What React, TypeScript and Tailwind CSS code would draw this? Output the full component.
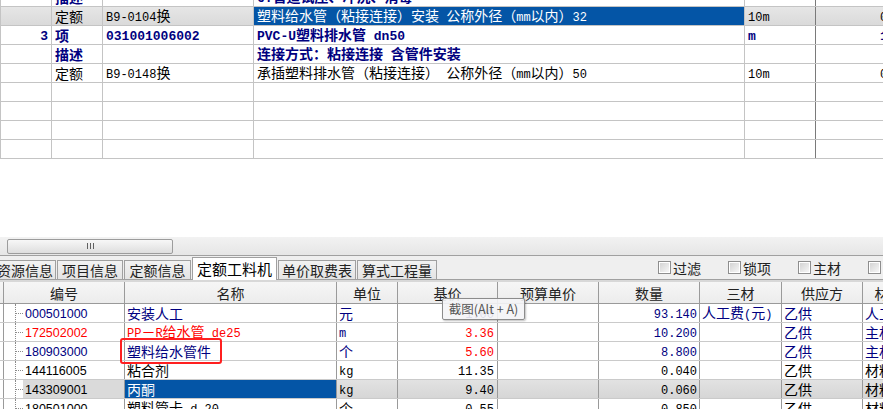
import React from 'react';

type Variant = 'mono' | 'monoBold' | 'sans';

// ASCII runs get a narrower latin face, CJK stays in Noto
const Txt = ({ s, v = 'mono' }: { s: string; v?: Variant }) => {
  const parts = s.match(/[\x20-\x7e]+|[^\x20-\x7e]+/g) ?? [];
  const latin = {
    mono: "font-['Liberation_Mono',monospace] text-[12px]",
    monoBold: "font-['Liberation_Mono',monospace] text-[13px] font-bold",
    sans: "font-['Liberation_Sans',sans-serif] text-[12.5px]",
  }[v];
  return (
    <span className="whitespace-pre">
      {parts.map((p, i) =>
        /[\x20-\x7e]/.test(p[0]) ? (
          <span key={i} className={latin}>
            {p}
          </span>
        ) : (
          <span key={i}>{p}</span>
        )
      )}
    </span>
  );
};

const topCols = [
  'w-[51px] shrink-0 border-r border-[#c4c4c4] justify-end pr-[3px]',
  'w-[51px] shrink-0 border-r border-[#c4c4c4] pl-[3px]',
  'w-[151px] shrink-0 border-r border-[#c4c4c4] pl-[3px]',
  'w-[491px] shrink-0 border-r border-[#c4c4c4] pl-[3px]',
  'w-[71px] shrink-0 border-r border-[#7a7a7a] pl-[3px]',
  'flex-1 pl-[64px]',
];

const topRows: { cells: string[]; bold?: boolean; gray?: boolean; sel?: number }[] = [
  { cells: ['', '描述', '', '6.管道试压、冲洗、消毒', '', ''], bold: true },
  { cells: ['', '定额', 'B9-0104换', '塑料给水管（粘接连接）安装 公称外径（mm以内）32', '10m', '0.1'], gray: true, sel: 3 },
  { cells: ['3', '项', '031001006002', 'PVC-U塑料排水管 dn50', 'm', '1'], bold: true },
  { cells: ['', '描述', '', '连接方式：粘接连接 含管件安装', '', ''], bold: true },
  { cells: ['', '定额', 'B9-0148换', '承插塑料排水管（粘接连接） 公称外径（mm以内）50', '10m', '0.1'] },
  { cells: ['', '', '', '', '', ''] },
  { cells: ['', '', '', '', '', ''] },
  { cells: ['', '', '', '', '', ''] },
  { cells: ['', '', '', '', '', ''] },
];

const TopGrid = () => (
  <div className="mt-[-12px] border-l border-[#c4c4c4]">
    {topRows.map((r, ri) => (
      <div
        key={ri}
        className={`flex h-[19px] border-b border-[#c4c4c4] ${r.gray ? 'bg-linear-to-b from-[#e6e6e6] to-[#dadada]' : ''}`}
      >
        {r.cells.map((c, ci) => (
          <div
            key={ci}
            className={`${topCols[ci]} flex items-center overflow-hidden whitespace-nowrap leading-[18px] ${
              r.sel === ci ? 'bg-[#0455a6] text-white' : r.bold ? 'text-[#000080] font-bold' : 'text-black'
            }`}
          >
            <Txt s={c} v={r.bold ? 'monoBold' : 'mono'} />
          </div>
        ))}
      </div>
    ))}
  </div>
);

const ScrollBar = () => (
  <div className="h-[18px] bg-linear-to-b from-[#f2f2f2] to-[#e6e6e6] flex items-center">
    <div className="ml-[7px] w-[166px] h-[15px] rounded-[2px] border border-[#9c9c9c] bg-linear-to-b from-[#f7f7f7] to-[#dedede] flex items-center justify-center gap-[2px]">
      <div className="w-px h-[6px] bg-[#606060]" />
      <div className="w-px h-[6px] bg-[#606060]" />
      <div className="w-px h-[6px] bg-[#606060]" />
    </div>
  </div>
);

const tabs: [string, string][] = [
  ['资源信息', 'w-[63px]'],
  ['项目信息', 'w-[66px]'],
  ['定额信息', 'w-[67px]'],
  ['定额工料机', 'w-[85px]'],
  ['单价取费表', 'w-[78px]'],
  ['算式工程量', 'w-[80px]'],
];
const checks = ['过滤', '锁项', '主材', '暂估'];

const TabStrip = () => (
  <div className="h-[25px] border-t border-b border-[#a0a0a0] bg-[#efefef] flex items-end whitespace-nowrap">
    <div className="flex items-end ml-[-7px] gap-px shrink-0">
      {tabs.map(([t, w], i) =>
        i === 3 ? (
          <div
            key={t}
            className={`${w} shrink-0 h-[23px] mb-[-1px] bg-white border border-b-0 border-[#a0a0a0] text-[15px] leading-[21px] text-black text-center`}
          >
            {t}
          </div>
        ) : (
          <div
            key={t}
            className={`${w} shrink-0 h-[19px] bg-linear-to-b from-[#f2f2f2] to-[#e4e4e4] border border-b-0 border-[#a0a0a0] text-[14px] leading-[18px] text-[#222] ${i === 0 ? 'text-right pr-[2px]' : 'text-center'}`}
          >
            {t}
          </div>
        )
      )}
    </div>
    <div className="ml-[221px] self-center flex gap-[27px] shrink-0">
      {checks.map((c) => (
        <div key={c} className="flex items-center gap-[2px] shrink-0">
          <div className="w-[13px] h-[13px] border border-[#8e8e8e] p-px bg-white">
            <div className="w-full h-full bg-linear-to-br from-[#d4d4d4] to-[#f6f6f6]" />
          </div>
          <span className="text-[14px] leading-[18px] text-[#222]">{c}</span>
        </div>
      ))}
    </div>
  </div>
);

const NAVY = 'text-[#000080]';
const RED = 'text-[#ff0000]';
const BLK = 'text-black';

type BRow = {
  code: [string, string];
  name: [string, string];
  unit: [string, string];
  base: [string, string];
  qty: [string, string];
  sancai: string;
  sup: [string, string];
  cat: [string, string];
  gray?: boolean;
};

const bRows: BRow[] = [
  { code: ['000501000', NAVY], name: ['安装人工', NAVY], unit: ['元', NAVY], base: ['1.00', NAVY], qty: ['93.140', NAVY], sancai: '人工费(元)', sup: ['乙供', NAVY], cat: ['人工', NAVY] },
  { code: ['172502002', RED], name: ['PP－R给水管 de25', RED], unit: ['m', NAVY], base: ['3.36', RED], qty: ['10.200', NAVY], sancai: '', sup: ['乙供', NAVY], cat: ['主材', NAVY] },
  { code: ['180903000', NAVY], name: ['塑料给水管件', NAVY], unit: ['个', NAVY], base: ['5.60', RED], qty: ['8.800', NAVY], sancai: '', sup: ['乙供', NAVY], cat: ['主材', NAVY] },
  { code: ['144116005', BLK], name: ['粘合剂', BLK], unit: ['kg', BLK], base: ['11.35', BLK], qty: ['0.040', BLK], sancai: '', sup: ['乙供', BLK], cat: ['材料', BLK] },
  { code: ['143309001', BLK], name: ['丙酮', BLK], unit: ['kg', BLK], base: ['9.40', BLK], qty: ['0.060', BLK], sancai: '', sup: ['乙供', BLK], cat: ['材料', BLK], gray: true },
  { code: ['180501000', BLK], name: ['塑料管卡 d.20', BLK], unit: ['个', BLK], base: ['0.55', BLK], qty: ['0.850', BLK], sancai: '', sup: ['乙供', BLK], cat: ['材料', BLK] },
];

const colLine = 'border-r border-[#9a9a9a]';
const cell = 'h-full flex items-center overflow-hidden whitespace-nowrap leading-[18px]';

const BottomGrid = () => (
  <div>
    <div className="flex h-[24px] border-t-2 border-b border-t-[#d8d8d8] border-b-[#9a9a9a] bg-linear-to-b from-[#f6f6f6] to-[#ececec] text-[14px] text-[#222]">
      <div className={`w-[4px] shrink-0 ${colLine}`} />
      {[
        ['编号', 'w-[121px]'],
        ['名称', 'w-[212px]'],
        ['单位', 'w-[61px]'],
        ['基价', 'w-[100px]'],
        ['预算单价', 'w-[101px]'],
        ['数量', 'w-[101px]'],
        ['三材', 'w-[82px]'],
        ['供应方', 'w-[81px]'],
        ['材料类别', 'w-[80px]'],
      ].map(([t, w]) => (
        <div key={t} className={`${w} shrink-0 ${colLine} ${cell} justify-center`}>
          {t}
        </div>
      ))}
    </div>
    {bRows.map((r, i) => (
      <div key={i} className="flex h-[19px] border-b border-[#cacaca] text-[14px]">
        <div className={`w-[4px] shrink-0 ${colLine}`} />
        <div className="w-[19px] shrink-0 h-full flex">
          <div className="ml-[11px] h-full border-l border-dotted border-[#8a8a8a] flex items-center">
            <div className="w-[7px] border-t border-dotted border-[#8a8a8a]" />
          </div>
        </div>
        <div className={`w-[102px] shrink-0 ${colLine} ${cell} pl-[2px] ${r.code[1]} ${r.gray ? 'bg-[#dadada]' : ''}`}>
          <Txt s={r.code[0]} v="sans" />
        </div>
        <div className={`w-[212px] shrink-0 ${colLine} ${cell} pl-[2px] ${r.gray ? 'bg-[#0455a6] text-white' : r.name[1]}`}>
          <Txt s={r.name[0]} />
        </div>
        <div className={`flex-1 flex h-full ${r.gray ? 'bg-linear-to-b from-[#e2e2e2] to-[#d6d6d6]' : ''}`}>
          <div className={`w-[61px] shrink-0 ${colLine} ${cell} pl-[2px] ${r.unit[1]}`}>
            <Txt s={r.unit[0]} />
          </div>
          <div className={`w-[100px] shrink-0 ${colLine} ${cell} justify-end pr-[3px] ${r.base[1]}`}>
            <Txt s={r.base[0]} />
          </div>
          <div className={`w-[101px] shrink-0 ${colLine} ${cell}`} />
          <div className={`w-[101px] shrink-0 ${colLine} ${cell} justify-end pr-[2px] ${r.qty[1]}`}>
            <Txt s={r.qty[0]} />
          </div>
          <div className={`w-[82px] shrink-0 ${colLine} ${cell} pl-[2px] ${NAVY}`}>
            <Txt s={r.sancai} />
          </div>
          <div className={`w-[81px] shrink-0 ${colLine} ${cell} pl-[2px] ${r.sup[1]}`}>{r.sup[0]}</div>
          <div className={`w-[80px] shrink-0 ${colLine} ${cell} pl-[2px] ${r.cat[1]}`}>{r.cat[0]}</div>
        </div>
      </div>
    ))}
  </div>
);

export default function App() {
  return (
    <div className="relative w-[883px] h-[409px] overflow-hidden bg-white font-['Noto_Sans_CJK_SC',sans-serif] text-[14px]">
      <TopGrid />
      <div className="h-[78px]" />
      <ScrollBar />
      <TabStrip />
      <BottomGrid />

      {/* screenshot-tool tooltip floating over the grid */}
      <div className="absolute left-[442px] top-[298px] w-[83px] h-[22px] rounded-[2px] border border-[#8c8c8c] bg-[#f4f4f6]/90 shadow-[1px_1px_2px_rgba(0,0,0,0.25)] flex items-center justify-center text-[12.5px] text-[#555] whitespace-nowrap">
        截图(Alt + A)
      </div>

      {/* red annotation box */}
      <div className="absolute left-[120px] top-[338px] w-[102px] h-[26px] border-2 border-[#ff1f1f] rounded-[3px]" />
    </div>
  );
}
